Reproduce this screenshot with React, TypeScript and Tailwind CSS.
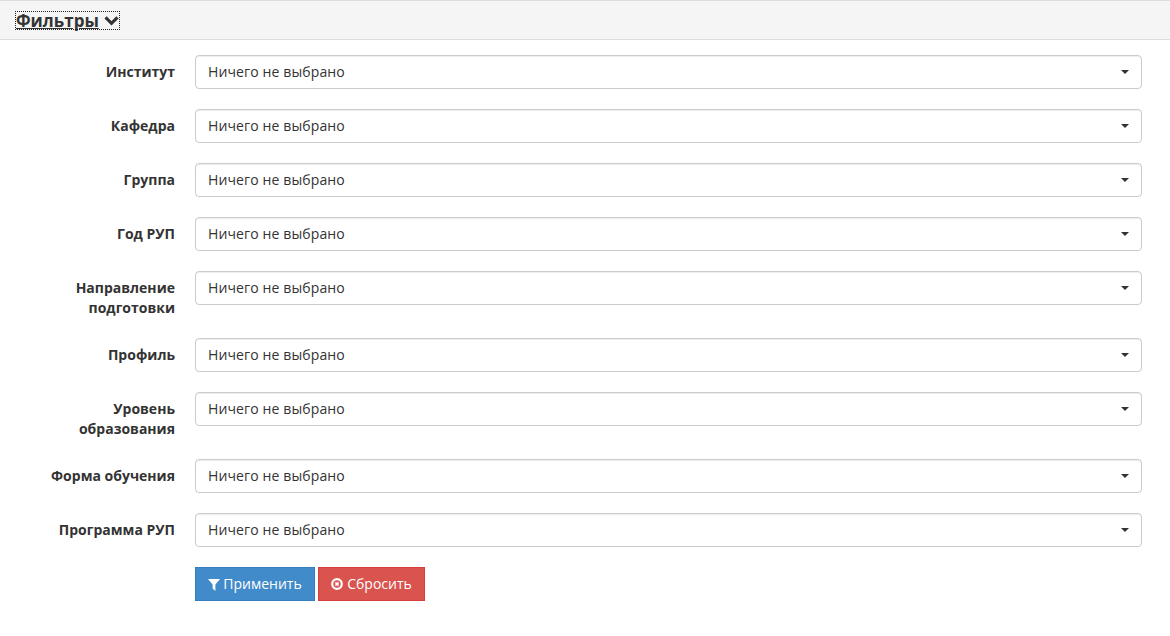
const FILTERS = [
  'Институт',
  'Кафедра',
  'Группа',
  'Год РУП',
  'Направление подготовки',
  'Профиль',
  'Уровень образования',
  'Форма обучения',
  'Программа РУП',
];

const FilterRow = ({ label }: { label: string }) => (
  <div className="flex items-start gap-5 mb-5">
    <label className="w-[175px] shrink-0 pt-[7px] pl-[40px] text-right font-bold leading-5">{label}</label>
    <button
      type="button"
      className="flex h-[34px] w-[947px] items-center justify-between rounded border border-[#cccccc] bg-white pl-3 pr-3 shadow-[inset_0_1px_1px_rgba(0,0,0,0.075)]"
    >
      <span className="tracking-[0.12px]">Ничего не выбрано</span>
      <span className="h-0 w-0 border-x-4 border-t-4 border-x-transparent border-t-[#333333]" />
    </button>
  </div>
);

export default function App() {
  return (
    <div className="h-[636px] bg-white text-[14px] leading-5 text-[#333333] font-['Open_Sans',sans-serif]">
      <div className="flex h-10 items-center border-y border-[#dddddd] bg-[#f5f5f5] pl-4">
        <a className="flex items-center gap-[5px] text-[17px] font-bold leading-[17px] underline outline-1 outline-dotted outline-[#212121]">
          Фильтры
          <svg viewBox="0 0 16 12" className="h-[11px] w-[15px]" fill="none" stroke="#333333" strokeWidth="3.4">
            <path d="M1.5 2.5 8 9 14.5 2.5" />
          </svg>
        </a>
      </div>
      <form className="pt-[15px]">
        {FILTERS.map((f) => (
          <FilterRow key={f} label={f} />
        ))}
        <div className="flex gap-[3px] pl-[195px]">
          <button
            type="button"
            className="flex h-[34px] w-[120px] items-center justify-center gap-[3px] border border-[#357ebd] bg-[#428bca] text-white"
          >
            <svg viewBox="0 0 12 13" className="h-[13px] w-3" fill="#ffffff">
              <path d="M0 1h12L7.4 6.4V13L4.6 10.6V6.4z" />
            </svg>
            Применить
          </button>
          <button
            type="button"
            className="flex h-[34px] w-[107px] items-center justify-center gap-1 border border-[#d43f3a] bg-[#d9534f] text-white"
          >
            <svg viewBox="0 0 12 12" className="h-3 w-3" fill="none" stroke="#ffffff">
              <circle cx="6" cy="6" r="4.8" strokeWidth="2.2" />
              <path d="M4.4 4.4 7.6 7.6M7.6 4.4 4.4 7.6" strokeWidth="1.5" />
            </svg>
            Сбросить
          </button>
        </div>
      </form>
    </div>
  );
}
